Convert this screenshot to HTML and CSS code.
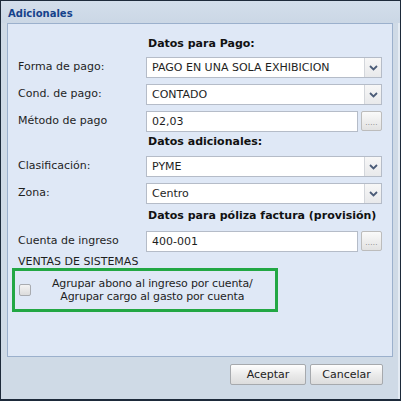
FILE: index.html
```html
<!DOCTYPE html>
<html>
<head>
<meta charset="utf-8">
<link rel="stylesheet" href="styles.css">
</head>
<body>
<div class="window">
  <div class="header">Adicionales</div>
  <div class="panel">
    <div class="heading h1">Datos para Pago:</div>
    <div class="row r1">
      <div class="label">Forma de pago:</div>
      <div class="combo"><span class="value">PAGO EN UNA SOLA EXHIBICION</span><span class="trigger"><svg width="9" height="6" viewBox="0 0 9 6"><polyline points="1,1 4.5,4.5 8,1" fill="none" stroke="#4b5c78" stroke-width="1.8"/></svg></span></div>
    </div>
    <div class="row r2">
      <div class="label">Cond. de pago:</div>
      <div class="combo"><span class="value">CONTADO</span><span class="trigger"><svg width="9" height="6" viewBox="0 0 9 6"><polyline points="1,1 4.5,4.5 8,1" fill="none" stroke="#4b5c78" stroke-width="1.8"/></svg></span></div>
    </div>
    <div class="row r2">
      <div class="label">Método de pago</div>
      <div class="textfield"><span class="value field">02,03</span><span class="dots">.....</span></div>
    </div>
    <div class="heading h2">Datos adicionales:</div>
    <div class="row r1b">
      <div class="label">Clasificación:</div>
      <div class="combo"><span class="value">PYME</span><span class="trigger"><svg width="9" height="6" viewBox="0 0 9 6"><polyline points="1,1 4.5,4.5 8,1" fill="none" stroke="#4b5c78" stroke-width="1.8"/></svg></span></div>
    </div>
    <div class="row r2">
      <div class="label">Zona:</div>
      <div class="combo"><span class="value">Centro</span><span class="trigger"><svg width="9" height="6" viewBox="0 0 9 6"><polyline points="1,1 4.5,4.5 8,1" fill="none" stroke="#4b5c78" stroke-width="1.8"/></svg></span></div>
    </div>
    <div class="heading h3">Datos para póliza factura (provisión)</div>
    <div class="row r1c">
      <div class="label">Cuenta de ingreso</div>
      <div class="textfield"><span class="value field">400-001</span><span class="dots">.....</span></div>
    </div>
    <div class="ventas">VENTAS DE SISTEMAS</div>
    <div class="greenbox">
      <span class="check"></span>
      <span class="checktext">Agrupar abono al ingreso por cuenta/<br>Agrupar cargo al gasto por cuenta</span>
    </div>
  </div>
  <div class="footer">
    <button class="btn aceptar">Aceptar</button>
    <button class="btn cancelar">Cancelar</button>
  </div>
</div>
</body>
</html>
```

FILE: styles.css
```css
* { box-sizing: border-box; }
html, body { margin: 0; padding: 0; background: #ffffff; }
body { font-family: "DejaVu Sans", Verdana, sans-serif; font-size: 11px; color: #1e1e1e; }

.window {
  width: 401px;
  height: 401px;
  border: 1px solid #1d2a3a;
  border-bottom-width: 2px;
  background: #cfdae6;
  box-shadow: inset -2px 0 0 #e4ebf3;
  padding: 0 7px 0 6px;
  display: flex;
  flex-direction: column;
}

.header {
  height: 22px;
  line-height: 22px;
  padding-top: 2px;
  font-size: 10px;
  font-weight: bold;
  color: #15428b;
  background: linear-gradient(#d3deeb, #cbd7e5);
  margin: 0 -7px 0 -6px;
  padding-left: 7px;
}

.panel {
  height: 334px;
  background: #dfe8f6;
  border: 1px solid #9bb0cc;
  padding: 12px 10px 0 10px;
  display: flex;
  flex-direction: column;
}

.heading {
  font-weight: bold;
  letter-spacing: 0;
  margin-left: 130px;
  height: 16px;
  line-height: 16px;
  color: #111;
}
.h2 { margin-top: 2px; }
.h3 { margin-top: 4px; }

.row {
  display: flex;
  align-items: center;
  height: 21px;
}
.r1 { margin-top: 5px; }
.r2 { margin-top: 6px; }
.r1b { margin-top: 6px; }
.r1c { margin-top: 7px; }

.label {
  width: 128px;
  flex: none;
  margin-top: -3px;
}

.combo {
  width: 236px;
  height: 21px;
  display: flex;
  border: 1px solid #b5bcc8;
  background: #fff;
}
.value {
  flex: 1;
  padding-left: 5px;
  line-height: 19px;
  white-space: nowrap;
}
.trigger {
  width: 17px;
  flex: none;
  border-left: 1px solid #d3d6db;
  background: linear-gradient(#f7f7f7, #e8e9eb);
  display: flex;
  align-items: center;
  justify-content: center;
}

.textfield {
  display: flex;
  width: 236px;
  height: 21px;
}
.field {
  border: 1px solid #b5bcc8;
  background: #fff;
  margin-right: 3px;
}
.dots {
  width: 21px;
  height: 20px;
  flex: none;
  border: 1px solid #bcbcbc;
  border-radius: 2px;
  background: linear-gradient(#fafafa, #e2e2e2);
  font-size: 7px;
  color: #7a7a7a;
  text-align: center;
  line-height: 22px;
  letter-spacing: 0.3px;
}

.ventas {
  margin-top: 4px;
  height: 12px;
  line-height: 12px;
}

.greenbox {
  margin: 0 0 0 -6px;
  width: 266px;
  height: 44px;
  border: 3px solid #22a744;
  display: flex;
  align-items: center;
  padding-left: 4px;
}
.check {
  width: 12px;
  height: 12px;
  border: 1px solid #a8abb0;
  border-radius: 2px;
  background: linear-gradient(#f3f3f3, #dcdcdc);
  flex: none;
}
.checktext {
  margin-left: 21px;
  text-align: center;
  line-height: 13px;
  letter-spacing: -0.15px;
}

.footer {
  flex: 1;
  display: flex;
  justify-content: flex-end;
  align-items: flex-start;
  padding-top: 7px;
  padding-right: 10px;
  gap: 4px;
}
.btn {
  font-family: "DejaVu Sans", Verdana, sans-serif;
  font-size: 11px;
  color: #222;
  height: 21px;
  border: 1px solid #a6a9ad;
  border-radius: 2px;
  background: linear-gradient(#fefefe, #e9e9e9 55%, #dcdcdc);
  padding: 0;
}
.aceptar { width: 76px; }
.cancelar { width: 73px; }
```
